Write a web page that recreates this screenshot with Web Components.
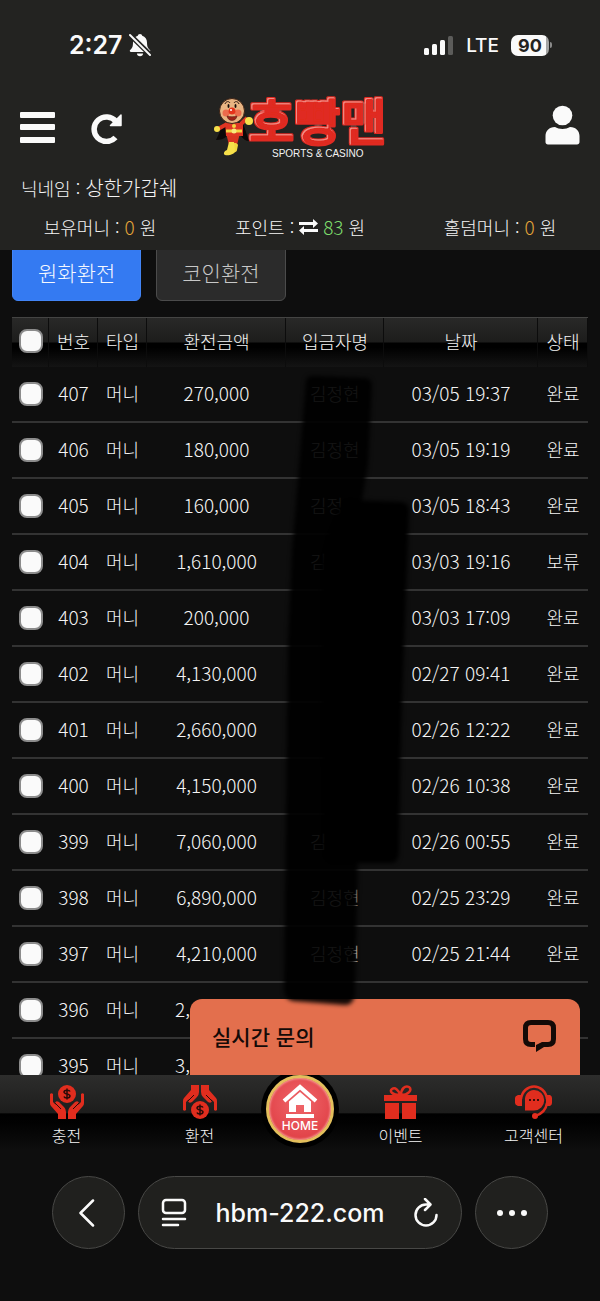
<!DOCTYPE html>
<html lang="ko">
<head>
<meta charset="utf-8">
<meta name="viewport" content="width=device-width, initial-scale=1">
<title>hbm-222.com</title>
<style>
html, body { margin: 0; }
body {
  background: #0e0e0e;
  color: #f5f5f5;
  font-family: "Noto Sans CJK KR", sans-serif;
  font-weight: 300;
}
</style>
</head>
<body>
<phone-page>
  <status-bar slot="top" time="2:27" network="LTE" battery="90"></status-bar>
  <site-header slot="top" nickname="상한가갑쉐">
    <balance-item label="보유머니" amount="0"></balance-item>
    <balance-item label="포인트" amount="83" exchange></balance-item>
    <balance-item label="홀덤머니" amount="0"></balance-item>
  </site-header>
  <tab-list>
    <tab-button active>원화환전</tab-button>
    <tab-button>코인환전</tab-button>
  </tab-list>
  <history-table></history-table>
  <live-chat>실시간 문의</live-chat>
  <marker-strokes></marker-strokes>
  <bottom-nav slot="bottom">
    <nav-item icon="charge">충전</nav-item>
    <nav-item icon="exchange">환전</nav-item>
    <home-button>HOME</home-button>
    <nav-item icon="gift">이벤트</nav-item>
    <nav-item icon="support">고객센터</nav-item>
  </bottom-nav>
  <browser-bar slot="bottom" url="hbm-222.com"></browser-bar>
</phone-page>

<script>
class PhonePage extends HTMLElement {
  constructor() {
    super();
    this.attachShadow({ mode: 'open' }).innerHTML = `
      <style>
      :host {
        display: flex;
        flex-direction: column;
        height: 100vh;
        overflow: hidden;
      }
      main {
        flex: 1;
        min-height: 0;
        position: relative;
        overflow: hidden;
        padding: 0 12px;
      }
      </style>
      <slot name="top"></slot>
      <main><slot></slot></main>
      <slot name="bottom"></slot>`;
  }
}
customElements.define('phone-page', PhonePage);

class StatusBar extends HTMLElement {
  constructor() {
    super();
    this.attachShadow({ mode: 'open' });
  }
  connectedCallback() {
    this.shadowRoot.innerHTML = `
      <style>
      :host {
        display: flex;
        justify-content: space-between;
        align-items: center;
        height: 90px;
        padding: 0 48px 0 69px;
        background: #232321;
        color: #fafafa;
        font-family: Inter, sans-serif;
      }
      div { display: flex; align-items: center; }
      .time { gap: 6px; font-size: 25px; font-weight: 600; }
      .signal { gap: 12px; font-size: 19px; font-weight: 500; }
      .battery { display: flex; align-items: center; gap: 1px; }
      .battery b {
        width: 38px;
        line-height: 21px;
        border-radius: 7px;
        background: linear-gradient(90deg, #fafafa 91%, #a5a5a4 91%);
        color: #232321;
        font-size: 18px;
        font-weight: 700;
        text-align: center;
      }
      .battery i { width: 2px; height: 6px; border-radius: 0 3px 3px 0; background: #8a8a89; }
      </style>
      <div class="time">
        <span>${this.getAttribute('time')}</span>
        <svg width="22" height="24" viewBox="0 0 22 24" fill="#fafafa">
          <path d="M11 1c1.300 0 2 .8 2.200 1.800C16.300 3.800 18 6.300 18 9.500c0 4.500 1 5.800 3 7.600.6.700.2 1.900-.9 1.900H2c-1.100 0-1.600-1.200-.9-1.900C3 15.300 4 14 4 9.500c0-3.200 1.700-5.700 4.800-6.700C9 1.800 9.700 1 11 1z"/>
          <path d="M8 20.500h6c0 1.700-1.200 2.800-3 2.800s-3-1.100-3-2.800z"/>
          <path d="M1 2l20.500 20" stroke="#232321" stroke-width="5"/>
          <path d="M1 2l20 20" stroke="#fafafa" stroke-width="2" stroke-linecap="round"/>
        </svg>
      </div>
      <div class="signal">
        <svg width="30" height="20" viewBox="0 0 30 20" fill="#fafafa">
          <rect x="0" y="13" width="5" height="7" rx="1.500"/>
          <rect x="8" y="9" width="5" height="11" rx="1.500"/>
          <rect x="16" y="5" width="5" height="15" rx="1.500"/>
          <rect x="24" y="1" width="5" height="19" rx="1.500" fill="#5c5c5a"/>
        </svg>
        <span>${this.getAttribute('network')}</span>
        <span class="battery"><b>${this.getAttribute('battery')}</b><i></i></span>
      </div>`;
  }
}
customElements.define('status-bar', StatusBar);

class SiteLogo extends HTMLElement {
  constructor() {
    super();
    this.attachShadow({ mode: 'open' }).innerHTML = `
      <style>
      :host { display: block; }
      a, svg { display: block; }
      svg { overflow: visible; }
      .name { font: 700 50px "Noto Sans CJK KR", sans-serif; }
      .sub { font: 400 10px "Liberation Sans", sans-serif; }
      </style>
      <a href="#" aria-label="호빵맨">
      <svg width="176" height="64" viewBox="0 0 176 64">
        <defs>
          <!-- thin light line along the upper left inside of each stroke -->
          <filter id="gloss" x="-10%" y="-10%" width="120%" height="120%">
            <feMorphology in="SourceAlpha" operator="erode" radius="1" result="inner"/>
            <feOffset in="inner" dx="1" dy="1" result="shift"/>
            <feFlood flood-color="#ffb0a6" flood-opacity=".6"/>
            <feComposite in2="inner" operator="in" result="light"/>
            <feComposite in="light" in2="shift" operator="out" result="line"/>
            <feMerge><feMergeNode in="SourceGraphic"/><feMergeNode in="line"/></feMerge>
          </filter>
        </defs>
        <text class="name" x="36" y="44" fill="#e02a20" stroke="#e02a20" stroke-width="3" stroke-linejoin="round" filter="url(#gloss)">호빵맨</text>
        <text class="sub" x="60" y="61" fill="#f2f2f2">SPORTS &amp; CASINO</text>
        <!-- cape -->
        <path d="M12 27L4 44c4 0 8-1 11-4h14c2 3 5 5 8 5L31 27z" fill="#0c0808"/>
        <!-- legs, body, arms -->
        <path d="M14 37h14l-3 12h-8z" fill="#d93420"/>
        <path d="M13 27h18v13H14z" fill="#df3523"/>
        <path d="M15 28l-9 5M29 28l6-6" stroke="#df3523" stroke-width="4"/>
        <path d="M20 49c-1-2 5-3 6 0l-1 5c0 2-3 3-5 2z" fill="#f1d63c"/>
        <path d="M17 46h5l1 9c0 3-6 5-10 4-2-1-1-4 2-5z" fill="#f7e04a"/>
        <path d="M14 35h16" stroke="#f3d441" stroke-width="3"/>
        <circle cx="22" cy="35" r="2.500" fill="#f8ea7d"/>
        <circle cx="22" cy="30" r="2" fill="#f3d441"/>
        <circle cx="5" cy="33" r="3" fill="#f7e04a"/>
        <circle cx="37" cy="25" r="4" fill="#f7e04a"/>
        <!-- face -->
        <circle cx="20" cy="15" r="12.500" fill="#e8b482" stroke="#3b2114"/>
        <circle cx="14" cy="17" r="3.500" fill="#ec6b4c"/>
        <circle cx="26" cy="17" r="3.500" fill="#ec6b4c"/>
        <circle cx="20" cy="15" r="3.500" fill="#e5331c"/>
        <circle cx="19" cy="14" r="1" fill="#fff"/>
        <path d="M13 8c1-3 4-3 5-1M22 7c1-2 4-2 5 1" fill="none" stroke="#2b1710"/>
        <ellipse cx="16.500" cy="10" rx="1" ry="2" fill="#170d09"/>
        <ellipse cx="23.500" cy="10" rx="1" ry="2" fill="#170d09"/>
        <path d="M15 20c3 1 7 1 10 0-1 6-9 6-10 0z" fill="#9c2218" stroke="#4b1510" stroke-width=".5"/>
      </svg>
      </a>`;
  }
}
customElements.define('site-logo', SiteLogo);

class SiteHeader extends HTMLElement {
  constructor() {
    super();
    this.attachShadow({ mode: 'open' });
  }
  connectedCallback() {
    this.shadowRoot.innerHTML = `
      <style>
      :host {
        display: block;
        background: #232321;
        padding-bottom: 11px;
      }
      .bar {
        display: grid;
        grid-template-columns: 1fr auto 1fr;
        align-items: center;
        height: 76px;
        padding: 0 20px;
      }
      .left { display: flex; gap: 35px; }
      button { border: 0; padding: 0; background: none; }
      button svg { display: block; }
      .user { justify-self: end; margin-top: -6px; }
      .nick { margin: 10px 0 0; padding: 0 21px; font-size: 18px; line-height: 24px; }
      .nick b { font-weight: inherit; font-size: 20px; line-height: 20px; }
      .balances {
        display: grid;
        grid-template-columns: repeat(3, 1fr);
        margin-top: 15px;
      }
      </style>
      <div class="bar">
        <div class="left">
          <button type="button" aria-label="메뉴">
            <svg width="36" height="32" viewBox="0 0 36 32" fill="#fafafa">
              <rect y="0" width="35" height="6" rx="1"/>
              <rect y="12" width="35" height="6" rx="1"/>
              <rect y="25" width="35" height="6" rx="1"/>
            </svg>
          </button>
          <button type="button" aria-label="새로고침">
            <svg width="32" height="32" viewBox="0 0 32 32">
              <path d="M25 9.500A12.300 12.300 0 1 0 24.500 25.500" fill="none" stroke="#fafafa" stroke-width="5.500"/>
              <path d="M30 3v10.500H19.500z" fill="#fafafa" stroke="#fafafa" stroke-width="1.500" stroke-linejoin="round"/>
            </svg>
          </button>
        </div>
        <site-logo></site-logo>
        <button class="user" type="button" aria-label="내 정보">
          <svg width="35" height="40" viewBox="0 0 35 40" fill="#fafafa">
            <circle cx="17.500" cy="10.500" r="9.800"/>
            <path d="M10 22c4 2.500 11 2.500 15 0 6 0 9.500 4 9.500 9v6c0 1.500-1 2.500-2.500 2.500H3C1.500 39.500.5 38.500.5 37v-6c0-5 3.500-9 9.500-9z"/>
          </svg>
        </button>
      </div>
      <p class="nick">닉네임 : <b>${this.getAttribute('nickname')}</b></p>
      <div class="balances"><slot></slot></div>`;
  }
}
customElements.define('site-header', SiteHeader);

class BalanceItem extends HTMLElement {
  constructor() {
    super();
    this.attachShadow({ mode: 'open' });
  }
  connectedCallback() {
    const exchange = this.hasAttribute('exchange');
    const arrows = `
      <svg width="19" height="16" viewBox="0 0 19 16" fill="#fafafa">
        <path d="M0 3h14V0l5 4.500L14 9V6H0zM19 10H5V7l-5 4.500L5 16v-3h14z"/>
      </svg>`;
    this.shadowRoot.innerHTML = `
      <style>
      :host {
        display: flex;
        justify-content: center;
        align-items: center;
        gap: 5px;
        font-size: 18px;
        line-height: 24px;
        white-space: nowrap;
      }
      .amount { color: ${exchange ? '#7ddc6c' : '#e5a63a'}; font-size: 19px; }
      </style>
      <span>${this.getAttribute('label')} :</span>
      ${exchange ? arrows : ''}
      <span class="amount">${this.getAttribute('amount')}</span>
      <span>원</span>`;
  }
}
customElements.define('balance-item', BalanceItem);

class TabList extends HTMLElement {
  constructor() {
    super();
    this.attachShadow({ mode: 'open' }).innerHTML = `
      <style>
      :host { display: flex; gap: 15px; margin: -6px 0 16px; }
      </style>
      <slot></slot>`;
  }
}
customElements.define('tab-list', TabList);

class TabButton extends HTMLElement {
  constructor() {
    super();
    this.attachShadow({ mode: 'open' }).innerHTML = `
      <style>
      :host { display: block; }
      button {
        display: block;
        height: 57px;
        padding: 0 25px 2px;
        border: 1px solid #4b4b4b;
        border-radius: 6px;
        background: #2b2b2b;
        color: #c8c8c8;
        font: inherit;
        font-size: 21px;
      }
      :host([active]) button { border-color: #4284f5; background: #347af2; color: #f5f8ff; }
      </style>
      <button type="button"><slot></slot></button>`;
  }
}
customElements.define('tab-button', TabButton);

// number, amount, depositor, date, state; the last rows run under the chat box
const HISTORY = [
  [407, '270,000', '김정현', '03/05 19:37', '완료'],
  [406, '180,000', '김정현', '03/05 19:19', '완료'],
  [405, '160,000', '김정', '03/05 18:43', '완료'],
  [404, '1,610,000', '김', '03/03 19:16', '보류'],
  [403, '200,000', '', '03/03 17:09', '완료'],
  [402, '4,130,000', '', '02/27 09:41', '완료'],
  [401, '2,660,000', '', '02/26 12:22', '완료'],
  [400, '4,150,000', '', '02/26 10:38', '완료'],
  [399, '7,060,000', '김', '02/26 00:55', '완료'],
  [398, '6,890,000', '김정현', '02/25 23:29', '완료'],
  [397, '4,210,000', '김정현', '02/25 21:44', '완료'],
  [396, '2,', '', '', ''],
  [395, '3,', '', '', '']
];

class HistoryTable extends HTMLElement {
  constructor() {
    super();
    this.attachShadow({ mode: 'open' });
  }
  connectedCallback() {
    this.shadowRoot.innerHTML = `
      <style>
      :host { display: block; }
      table {
        width: 100%;
        table-layout: fixed;
        border-collapse: separate;
        border-spacing: 0;
        font-size: 18px;
        line-height: 24px;
        text-align: center;
        white-space: nowrap;
      }
      th, td { padding: 0 0 2px; font-weight: inherit; box-sizing: border-box; }
      th {
        height: 50px;
        padding-bottom: 4px;
        border-top: 1px solid #444443;
        background: linear-gradient(#292928 0, #1d1d1c 48%, #000 52%, #000 60%, #141414);
        box-shadow: inset -1px 0 #0c0c0c;
      }
      td { height: 56px; border-bottom: 2px solid #333; }
      .check { padding: 0; }
      .num { font-size: 19px; }
      .name { text-align: left; padding-left: 24px; }
      .cut { text-align: left; padding-left: 28px; }
      input {
        appearance: none;
        display: block;
        width: 24px;
        height: 24px;
        margin: 0 auto;
        border: 2px solid #8c8c8c;
        border-radius: 8px;
        background: #fafafa;
      }
      </style>
      <table>
        <colgroup>
          <col style="width:37px"><col style="width:49px"><col style="width:49px">
          <col style="width:139px"><col style="width:98px"><col style="width:154px"><col style="width:50px">
        </colgroup>
        <thead>
          <tr>
            <th><input type="checkbox" aria-label="전체 선택"></th>
            <th>번호</th><th>타입</th><th>환전금액</th><th>입금자명</th><th>날짜</th><th>상태</th>
          </tr>
        </thead>
        <tbody>${HISTORY.map(row => this.row(row)).join('')}</tbody>
      </table>`;
  }
  row([no, amount, name, date, state]) {
    return `
      <tr>
        <td class="check"><input type="checkbox" aria-label="${no}"></td>
        <td class="num">${no}</td>
        <td>머니</td>
        <td class="num${date ? '' : ' cut'}">${amount}</td>
        <td class="name">${name}</td>
        <td class="num">${date}</td>
        <td>${state}</td>
      </tr>`;
  }
}
customElements.define('history-table', HistoryTable);

class LiveChat extends HTMLElement {
  constructor() {
    super();
    this.attachShadow({ mode: 'open' }).innerHTML = `
      <style>
      :host {
        display: block;
        position: absolute;
        right: 20px;
        bottom: 0;
        width: 65%;
      }
      button {
        display: flex;
        justify-content: space-between;
        align-items: center;
        width: 100%;
        height: 76px;
        padding: 0 24px 2px 22px;
        border: 0;
        border-radius: 12px 12px 0 0;
        background: #e36f4d;
        color: #140a07;
        font: inherit;
        font-size: 21px;
        font-weight: 500;
      }
      </style>
      <button type="button">
        <slot></slot>
        <svg width="33" height="32" viewBox="0 0 33 32">
          <path d="M12 24.500H8q-5.500 0-5.500-5.500V8q0-5.500 5.500-5.500h17q5.500 0 5.500 5.500v11q0 5.500-5.500 5.500h-4" fill="none" stroke="#140a07" stroke-width="5"/>
          <path d="M13 25l6-3h4v5h-2l-8 5z" fill="#140a07"/>
        </svg>
      </button>`;
  }
}
customElements.define('live-chat', LiveChat);

// black marker over the depositor column
class MarkerStrokes extends HTMLElement {
  constructor() {
    super();
    this.attachShadow({ mode: 'open' }).innerHTML = `
      <style>
      :host {
        display: block;
        position: absolute;
        top: 120px;
        left: 47%;
        pointer-events: none;
      }
      svg { display: block; filter: blur(2px); }
      </style>
      <svg width="136" height="644" viewBox="0 0 136 644">
        <path d="M24 10q2-5 12-4l48 2q6 1 6 7l-4 80-12 70 2 320-3 140q-2 10-10 10l-52-4q-8-2-9-10l4-350 4-90z" opacity=".92"/>
        <path d="M60 134q2-5 10-4l50 2q7 1 7 8l-8 220-2 120q0 13-8 13H54q-12 0-12-12l-2-160V190l6-24z"/>
      </svg>`;
  }
}
customElements.define('marker-strokes', MarkerStrokes);

class BottomNav extends HTMLElement {
  constructor() {
    super();
    this.attachShadow({ mode: 'open' }).innerHTML = `
      <style>
      :host { display: block; position: relative; }
      nav {
        display: flex;
        height: 75px;
        overflow: hidden;
        background: linear-gradient(#2d2d2c 0, #1d1d1c 50%, #000 52%, #020202 65%, #0e0e0e);
      }
      </style>
      <nav><slot></slot></nav>`;
  }
}
customElements.define('bottom-nav', BottomNav);

const COIN = `
  <circle r="9" fill="#e12d1e"/>
  <path d="M3-2.500C2.500-4-2.500-4.500-3-2c0 2.500 6 1.500 6 4C3 4.500-2.500 4.500-3 2.500M0-5.500v11" fill="none" stroke="#2a0b08" stroke-width="1.500"/>`;
const HAND = `
  <path d="M0 9q1.500-1.500 3 0v8l3 3-1-2q1-3 4-1l5 5q2 2 2 5v7H8v-5l-7-8q-1-1-1-3z" fill="#e12d1e"/>
  <path d="M5 18l6 6" stroke="#2a0b08" stroke-width="1"/>`;
const HANDS = `${HAND}<g transform="matrix(-1 0 0 1 34 0)">${HAND}</g>`;
const ICONS = {
  charge: `${HANDS}<g transform="translate(17 9)">${COIN}</g>`,
  exchange: `<g transform="matrix(1 0 0 -1 0 34)">${HANDS}</g><g transform="translate(17 25)">${COIN}</g>`,
  gift: `
    <path d="M0 10h33v6H0zM1 18h14v16H1zM18 18h14v16H18zM14 10h5v6h-5z" fill="#e12d1e"/>
    <path d="M16 10C8 10 5 6 8 4c3-2 7 1 8 6zM17 10c0-6 4-10 8-8 4 3-1 8-8 8z" fill="none" stroke="#e12d1e" stroke-width="2.500"/>`,
  support: `
    <path d="M4 14C5 6 11 1.500 17 1.500S29 6 30 14M30 18c-1 7-5 11-12 13" fill="none" stroke="#e12d1e" stroke-width="2.500"/>
    <path d="M5 10v11H1q-3-1-3-3v-5q0-2 3-3zM29 10v11h4q2-1 2-3v-5q0-2-2-3z" fill="#e12d1e"/>
    <circle cx="18" cy="31" r="3" fill="#e12d1e"/>
    <path d="M17 5a10 10 0 1 1 0 20.500H8V16C7.500 10 11 5 17 5z" fill="#e12d1e"/>
    <path d="M12 15h2M16 15h2M20 15h2" stroke="#3a0d09" stroke-width="2"/>`
};

class NavItem extends HTMLElement {
  constructor() {
    super();
    this.attachShadow({ mode: 'open' });
  }
  connectedCallback() {
    this.shadowRoot.innerHTML = `
      <style>
      :host { display: block; flex: 1; }
      a {
        display: flex;
        flex-direction: column;
        align-items: center;
        gap: 4px;
        padding-top: 10px;
        color: #f5f5f5;
        font-size: 16px;
        line-height: 24px;
        text-decoration: none;
      }
      svg { display: block; overflow: visible; }
      </style>
      <a href="#">
        <svg width="34" height="34" viewBox="0 0 34 34">${ICONS[this.getAttribute('icon')]}</svg>
        <span><slot></slot></span>
      </a>`;
  }
}
customElements.define('nav-item', NavItem);

class HomeButton extends HTMLElement {
  constructor() {
    super();
    this.attachShadow({ mode: 'open' }).innerHTML = `
      <style>
      :host { display: block; flex: 0 0 68px; }
      a {
        display: flex;
        flex-direction: column;
        align-items: center;
        box-sizing: border-box;
        width: 68px;
        height: 68px;
        padding-top: 6px;
        border: 3px solid #e3bf5c;
        border-radius: 50%;
        background: radial-gradient(circle at 50% 40%, #f0676b, #e2444a 70%);
        box-shadow: 0 0 0 5px #000, inset 0 0 2px 1px #f59a94;
        color: #fff;
        font: 500 12px/16px Inter, sans-serif;
        text-decoration: none;
      }
      svg { display: block; }
      </style>
      <a href="#">
        <svg width="36" height="34" viewBox="0 0 36 34" fill="#fff">
          <path d="M2 17L18 3l16 14" fill="none" stroke="#fff" stroke-width="4"/>
          <path d="M18 8l11 9.500V28h-7v-7h-8v7H7V17.500zM4 30h28v4H4z"/>
        </svg>
        <slot></slot>
      </a>`;
  }
}
customElements.define('home-button', HomeButton);

class BrowserBar extends HTMLElement {
  constructor() {
    super();
    this.attachShadow({ mode: 'open' });
  }
  connectedCallback() {
    this.shadowRoot.innerHTML = `
      <style>
      :host {
        display: flex;
        gap: 13px;
        padding: 26px 52px 52px;
        background: #0e0e0e;
        font-family: Inter, sans-serif;
      }
      .round, .pill {
        box-sizing: border-box;
        display: flex;
        align-items: center;
        justify-content: center;
        height: 73px;
        border: 1px solid #484846;
        border-radius: 37px;
        background: #20201e;
        color: #fafafa;
      }
      .round { flex: 0 0 73px; padding: 0; }
      .pill { flex: 1; justify-content: space-between; padding: 0 22px; }
      .pill button {
        border: 0;
        padding: 0;
        background: none;
        color: inherit;
        font: 500 25px/30px Inter, sans-serif;
      }
      svg { display: block; fill: none; stroke: #fafafa; stroke-width: 2.500; stroke-linecap: round; stroke-linejoin: round; }
      </style>
      <button class="round" type="button" aria-label="뒤로">
        <svg width="20" height="28" viewBox="0 0 20 28"><path d="M14 1.500L1.500 14 14 26.500"/></svg>
      </button>
      <div class="pill">
        <button type="button" aria-label="페이지 메뉴">
          <svg width="26" height="30" viewBox="0 0 26 30"><rect x="2" y="2" width="22" height="13" rx="3"/><path d="M2 21h22M2 27h15"/></svg>
        </button>
        <button type="button">${this.getAttribute('url')}</button>
        <button type="button" aria-label="새로고침">
          <svg width="26" height="30" viewBox="0 0 26 30"><path d="M17 6.500H13A10.500 10.500 0 1 0 23.500 17M12 1l5.500 5.500L12 12"/></svg>
        </button>
      </div>
      <button class="round" type="button" aria-label="더 보기">
        <svg width="32" height="8" viewBox="0 0 32 8" style="fill:#fafafa;stroke:none"><circle cx="4" cy="4" r="3"/><circle cx="16" cy="4" r="3"/><circle cx="28" cy="4" r="3"/></svg>
      </button>`;
  }
}
customElements.define('browser-bar', BrowserBar);
</script>
</body>
</html>
